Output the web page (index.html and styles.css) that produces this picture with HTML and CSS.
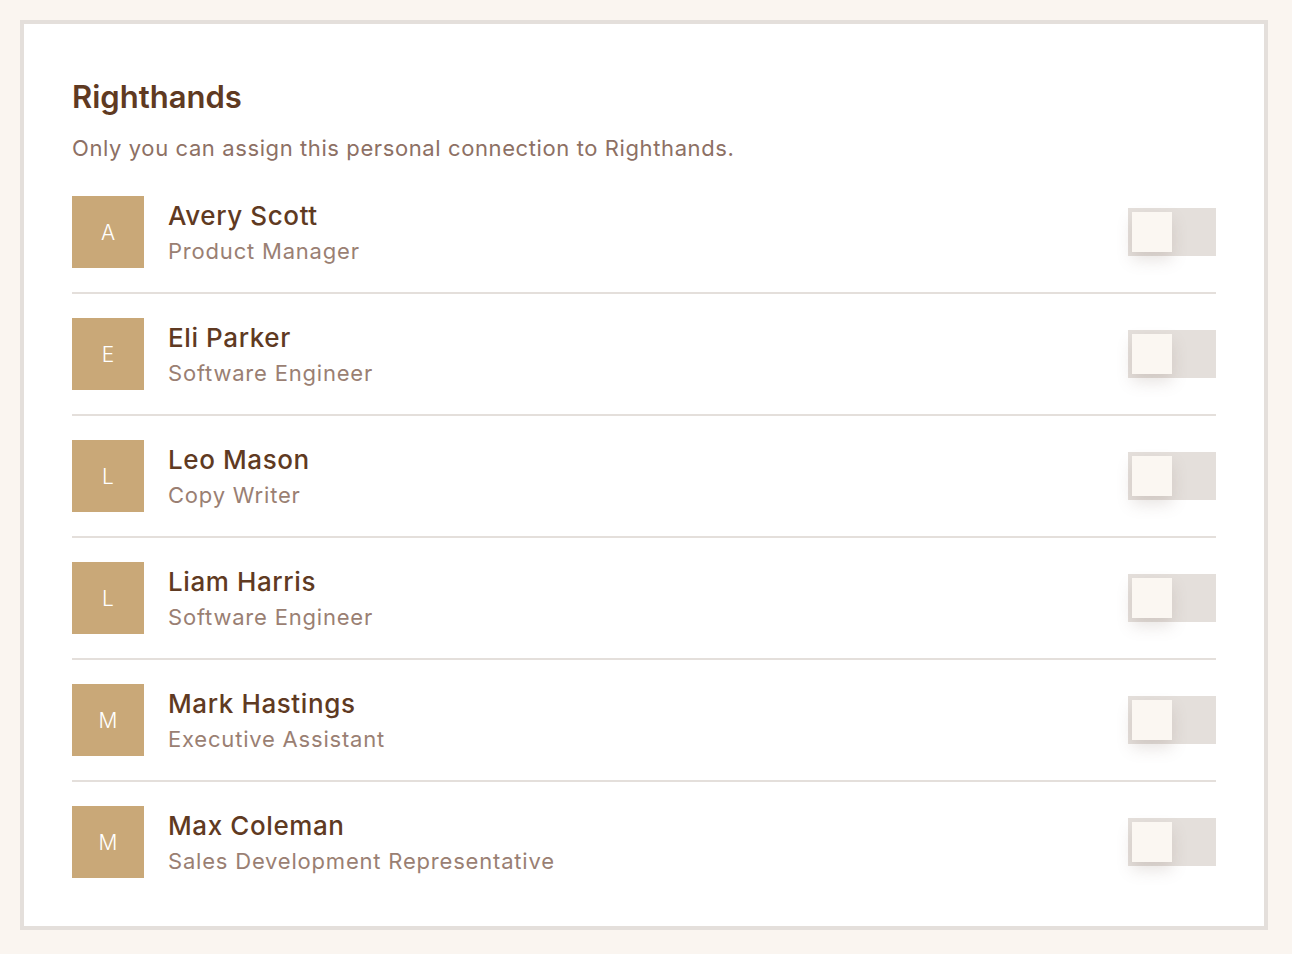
FILE: index.html
```html
<!DOCTYPE html>
<html lang="en">
<head>
<meta charset="utf-8">
<title>Righthands</title>
<link rel="stylesheet" href="styles.css">
</head>
<body>
<main class="page">
  <section class="card">
    <h1 class="title">Righthands</h1>
    <p class="subtitle">Only you can assign this personal connection to Righthands.</p>
    <ul class="list">
      <li class="row">
        <div class="avatar">A</div>
        <div class="info"><div class="name">Avery Scott</div><div class="role">Product Manager</div></div>
        <button class="toggle" aria-label="Assign Avery Scott"><span class="knob"></span></button>
      </li>
      <li class="row">
        <div class="avatar">E</div>
        <div class="info"><div class="name">Eli Parker</div><div class="role">Software Engineer</div></div>
        <button class="toggle" aria-label="Assign Eli Parker"><span class="knob"></span></button>
      </li>
      <li class="row">
        <div class="avatar">L</div>
        <div class="info"><div class="name">Leo Mason</div><div class="role">Copy Writer</div></div>
        <button class="toggle" aria-label="Assign Leo Mason"><span class="knob"></span></button>
      </li>
      <li class="row">
        <div class="avatar">L</div>
        <div class="info"><div class="name">Liam Harris</div><div class="role">Software Engineer</div></div>
        <button class="toggle" aria-label="Assign Liam Harris"><span class="knob"></span></button>
      </li>
      <li class="row">
        <div class="avatar">M</div>
        <div class="info"><div class="name">Mark Hastings</div><div class="role">Executive Assistant</div></div>
        <button class="toggle" aria-label="Assign Mark Hastings"><span class="knob"></span></button>
      </li>
      <li class="row">
        <div class="avatar">M</div>
        <div class="info"><div class="name">Max Coleman</div><div class="role">Sales Development Representative</div></div>
        <button class="toggle" aria-label="Assign Max Coleman"><span class="knob"></span></button>
      </li>
    </ul>
  </section>
</main>
</body>
</html>
```
FILE: styles.css
```css
* { box-sizing: border-box; }
html, body { margin: 0; padding: 0; }
body {
  background: #faf5f0;
  font-family: Inter, "Noto Sans", sans-serif;
  width: 1292px;
  height: 954px;
}
.page {
  padding: 20px 24px 24px 20px;
}
.card {
  width: 1248px;
  height: 910px;
  background: #ffffff;
  border: 4px solid #e4dfdb;
  padding: 49px 48px 48px 48px;
}
.title {
  margin: 0;
  font-size: 31px;
  line-height: 48px;
  font-weight: 600;
  color: #5f3a22;
  letter-spacing: 0px;
}
.subtitle {
  margin: 11px 0 0 0;
  font-size: 22px;
  line-height: 32px;
  font-weight: 400;
  color: #8d7064;
  letter-spacing: 0.6px;
}
.list {
  list-style: none;
  margin: 32px 0 0 0;
  padding: 0;
}
.row {
  display: flex;
  align-items: center;
  padding: 24px 0;
  border-bottom: 2px solid #e4dfdb;
}
.row:first-child { padding-top: 0; }
.row:last-child { border-bottom: none; padding-bottom: 0; }
.avatar {
  width: 72px;
  height: 72px;
  flex: none;
  background: #c9a878;
  color: #ffffff;
  display: flex;
  align-items: center;
  justify-content: center;
  font-size: 21px;
  font-weight: 300;
}
.info {
  flex: 1;
  margin-left: 24px;
  display: flex;
  flex-direction: column;
}
.name {
  font-size: 26px;
  line-height: 34px;
  font-weight: 500;
  color: #5f3a22;
  letter-spacing: 0.6px;
}
.role {
  margin-top: 3px;
  font-size: 22px;
  line-height: 30px;
  color: #9a7f73;
  letter-spacing: 0.8px;
}
.toggle {
  width: 88px;
  height: 48px;
  flex: none;
  background: #e4dfdb;
  border: none;
  padding: 4px;
  margin: 0;
  display: flex;
  align-items: flex-start;
  cursor: pointer;
}
.knob {
  width: 40px;
  height: 40px;
  background: #fbf7f2;
  box-shadow: 0 8px 16px rgba(120, 100, 90, 0.18);
}
```
